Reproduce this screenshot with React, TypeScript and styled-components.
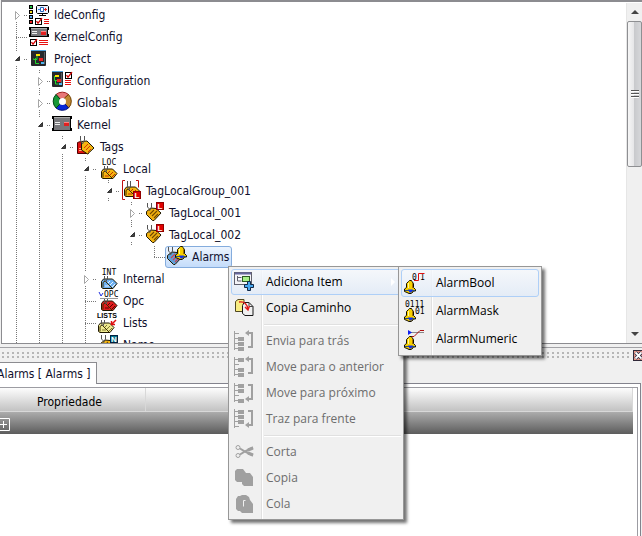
import React from "react";
import styled, { createGlobalStyle, css } from "styled-components";

const GlobalStyle = createGlobalStyle`
  * { box-sizing: border-box; }
  body { margin: 0; background: #f0f0f0; overflow: hidden; }
  button { font: inherit; color: inherit; margin: 0; padding: 0; border: 0; background: none; text-align: left; }
  svg { display: block; flex: none; overflow: visible; }
`;

const uiFont = css`
  font-family: "DejaVu Sans Condensed", "Noto Sans", sans-serif;
  font-size: 12px;
  line-height: 16px;
`;

/* ---------- icons ---------- */

const Icon = ({ children }: { children: React.ReactNode }) => (
  <svg width="22" height="22" viewBox="0 0 22 22" aria-hidden="true">
    {children}
  </svg>
);

const Check = ({ x, y }: { x: number; y: number }) => (
  <g transform={`translate(${x} ${y})`}>
    <rect x=".5" y=".5" width="6" height="6" fill="#fff" stroke="#000" />
    <path d="M1.5 3.2 3 5.2 7 .2" stroke="#d80000" strokeWidth="1.3" fill="none" />
  </g>
);

const RedLines = ({ x, y, w }: { x: number; y: number; w: number }) => (
  <path
    d={`M${x} ${y + 0.5}h${w}M${x} ${y + 2.5}h${w}M${x} ${y + 4.5}h${w}`}
    stroke="#e81010"
  />
);

const Device = ({ y, h }: { y: number; h: number }) => (
  <g transform={`translate(0 ${y})`}>
    <rect x="1.5" y=".5" width="17" height={h - 1} fill="#77777b" stroke="#000" />
    <path d={`M.5 0v${h}M19.5 0v${h}`} stroke="#000" strokeDasharray={`3 ${h - 6} 3 0`} />
    <path d="M2 1.5h16" stroke="#aaa" />
    <path d={`M3 ${Math.floor(h / 2) - 0.5}h5M3 ${Math.floor(h / 2) + 1.5}h5`} stroke="#eee" />
    <rect x="12" y={Math.floor(h / 2) - 1} width="5" height="4" fill="#e02020" />
    <path d={`M12 ${Math.floor(h / 2) - 0.5}h5`} stroke="#ff8080" />
  </g>
);

const Board = ({ x, y, w }: { x: number; y: number; w: number }) => (
  <g transform={`translate(${x} ${y})`}>
    <rect width={w} height="16" rx="1" fill="#26282b" />
    <path d={`M0 .5h${w}`} stroke="#4fa3e0" />
    <path d={`M${w - 1.5} 2v12`} stroke="#5b5e63" />
    <path d={w > 12 ? "M5 5.5M6 9.500H2.500v-1M4.500 8v5.500H8M6 9.500V6" : "M2.500 5v4.500h3M3.500 10v3h3"} stroke="#23d52c" fill="none" />
    <rect x={w > 12 ? 5 : 3} y="4" width="4" height="2" fill="#ffe600" />
    <rect x={w > 12 ? 8 : 5} y="8" width="4" height="3" fill="#ee2222" />
    <rect x={w > 12 ? 10 : 7} y="12" width="3" height="2" fill="#4fb4f0" />
  </g>
);

const Badge = ({ x, y, color, edge, letter }: { x: number; y: number; color: string; edge: string; letter: string }) => (
  <g>
    <rect x={x + 0.5} y={y + 0.5} width="7" height="7" fill={color} stroke={edge} />
    <text x={x + 4} y={y + 7} fontSize="8" fontWeight="700" fill="#fff" textAnchor="middle" fontFamily="Liberation Sans, sans-serif">
      {letter}
    </text>
  </g>
);

const Diamond = ({ fill, line }: { fill: string; line: string }) => (
  <g>
    <path d="M2.5 9.5 7 6l5 .5 5 4.5-7 7.5H8.5l-6-6z" fill={fill} stroke="#201800" />
    <path d="m6 12 4-4m-2 6 5-5m-3 7 4-4" stroke={line} strokeWidth="1.1" />
    <path d="M3.5 1v4l2 2M7.5 1v4l-2 4" stroke="#555" fill="none" />
  </g>
);

const LowTag = ({ fill, line = "#c33000", dx = 0 }: { fill: string; line?: string; dx?: number }) => (
  <g transform={`translate(${dx} 0)`}>
    <path d="M3.5 19.5v-6L5.5 11h9l4.5 4.5-4 5H5z" fill={fill} stroke="#201800" />
    <path d="M5 19.5v-5L7 13l7 7" fill="none" stroke="#403000" />
    <path d="m10 15 2-2m0 4 3-3m-1 5 3-3M7 18h4" stroke={line} />
    <path d="M6.5 8v4l2 2M9.5 8v3l-2 3" stroke="#555" fill="none" />
  </g>
);

const Caption = ({ children }: { children: string }) => (
  <text x="11" y="7" fontSize="8" textAnchor="middle" fontFamily="DejaVu Sans Mono, monospace">
    {children}
  </text>
);

const Bell = ({ x, y }: { x: number; y: number }) => (
  <g transform={`translate(${x} ${y})`}>
    <path d="M5.5.5h2l.5 1 1.5 2v4l2 2V11H9v1l-2 1.5H5l-2-1-2.5-1V9l2-1.5v-4l2-2z" fill="#f7d000" stroke="#151000" />
    <path d="M4.5 3v5" stroke="#fff7a0" />
    <path d="M8.5 3v5" stroke="#a87500" />
    <path d="M1 10.5h10" stroke="#28507a" />
    <path d="M4 9.5h5l-1.5 3h-2z" fill="#1030e8" />
  </g>
);

type IconName =
  | "ide" | "kernelConfig" | "project" | "config" | "globals" | "kernel" | "tags" | "local"
  | "group" | "tag" | "alarms" | "int" | "opc" | "lists" | "net";

const treeIcons: Record<IconName, React.ReactNode> = {
  ide: (
    <>
      {["#20c040", "#f0d820", "#58a8f0", "#e82020"].map((c, i) => (
        <rect key={c} x=".5" y={1.5 + 5 * i} width="3" height="3" fill={c} stroke="#000" />
      ))}
      <path d="M8.5 1.5h10l1 1v6l-1 1h-10l-1-1v-6z" fill="#eef4ff" stroke="#000" />
      <path d="M9 5.5h3" stroke="#2f86e0" />
      <path d="M11.5 3.5h3v4h-3z" fill="#fff" stroke="#2868c0" />
      <path d="M15 5.5h3M16.5 4v3" stroke="#e02020" />
      <path d="M13.5 10v1.5M10 11.5h7" stroke="#000" />
      <Check x={6} y={14} />
      <RedLines x={15} y={15} w={5} />
    </>
  ),
  kernelConfig: (
    <>
      <Device y={1} h={10} />
      <Check x={1} y={13} />
      <RedLines x={10} y={14} w={9} />
    </>
  ),
  project: <Board x={2} y={2} w={15} />,
  config: (
    <>
      <Board x={0} y={1} w={11} />
      <Check x={13} y={2} />
      <RedLines x={13} y={10} w={6} />
    </>
  ),
  globals: (
    <>
      <path d="M4 2.5A9.5 9.5 0 0 1 16.5 2.5L13 7H8z" fill="#e87878" stroke="#a02020" />
      <path d="M16.5 2.5A9.5 9.5 0 0 1 16.5 16l-4-4V6z" fill="#c08830" stroke="#704000" />
      <path d="M16.5 16A9.5 9.5 0 0 1 4 16l4-4h5z" fill="#0828d8" stroke="#001078" />
      <path d="M4 16A9.5 9.5 0 0 1 4 2.5L8 7v5z" fill="#189838" stroke="#004818" />
      <circle cx="10.5" cy="9.5" r="3.5" fill="#fff" />
    </>
  ),
  kernel: <Device y={2} h={15} />,
  tags: (
    <>
      <path d="M2.5 17.5v-11l3-1 8 12z" fill="#e01010" stroke="#500000" />
      <path d="M4 12.5h4M4 14.5h4" stroke="#ffb080" />
      <path d="M6.5 5.5 12 5l7 7-6.5 6-6-4z" fill="#f5b610" stroke="#201800" />
      <path d="m9 12 4-4m-2 6 4-4m-2 6 3-3" stroke="#e03000" />
      <path d="M5.5 0v4l2 4M9.5 0v4l-2 4" stroke="#555" fill="none" />
    </>
  ),
  local: (<><LowTag fill="#f5b610" /><Caption>LOC</Caption></>),
  group: (
    <>
      <path d="M4 .5H1.5v19H4M15 .5h2.5v7" stroke="#c01010" fill="none" />
      <g transform="translate(0 -4)"><LowTag fill="#f5b610" /></g>
      <path d="M6.5 1v4M9.5 1v4" stroke="#555" />
      <Badge x={12} y={11} color="#e00000" edge="#900000" letter="L" />
    </>
  ),
  tag: (
    <>
      <Diamond fill="#f0b010" line="#704800" />
      <Badge x={12} y={0} color="#e00000" edge="#900000" letter="L" />
    </>
  ),
  alarms: (
    <>
      <g transform="translate(-2 0)"><Diamond fill="#5f9fd8" line="#d04050" /></g>
      <Bell x={8} y={0} />
    </>
  ),
  int: (<><LowTag fill="#6db0f0" line="#e8f4ff" /><Caption>INT</Caption></>),
  opc: (
    <>
      <LowTag fill="#e01c1c" line="#5c0000" />
      <path d="M2 8.5h18" stroke="#999" />
      <path d="m1 2 2 4 2-3" stroke="#2030e0" fill="none" />
      <text x="6" y="7" fontSize="8" fontFamily="DejaVu Sans Mono, monospace">OPC</text>
    </>
  ),
  lists: (
    <>
      <LowTag fill="#eeea90" line="#807830" dx={-3} />
      <path d="m18 8-4 4m-.5-3v3.5H17" stroke="#e01010" strokeWidth="1.5" fill="none" />
      <text x="9" y="6" fontSize="7" textAnchor="middle" fontWeight="700" fontFamily="Liberation Sans, sans-serif">LISTS</text>
    </>
  ),
  net: (
    <>
      <Diamond fill="#f5b610" line="#704800" />
      <Badge x={12} y={1} color="#087890" edge="#002040" letter="N" />
    </>
  ),
};

/* ---------- tree ---------- */

const Page = styled.main`
  ${uiFont}
  color: #000;
  display: flex;
  flex-direction: column;
  height: 100vh;
  position: relative;
  overflow: hidden;
  background: #f0f0f0;
`;

const TreePane = styled.section`
  flex: 1 1 0;
  min-height: 0;
  display: flex;
  margin-left: 1px;
  background: #fff;
  border: solid #8c8c90;
  border-width: 2px 0 1px 1px;
`;

const TreeList = styled.ul`
  flex: 1;
  margin: 0;
  padding: 2px 0 0 3px;
  list-style: none;
  overflow: hidden;
`;

const TreeRow = styled.li`
  display: flex;
  height: 22px;
`;

type GuideKind = "none" | "line" | "arrow" | "tee" | "corner" | "first";
const dotsV = "repeating-linear-gradient(to bottom, #777 0 1px, transparent 1px 2px)";
const dotsH = "repeating-linear-gradient(to right, #777 0 1px, transparent 1px 2px)";
const guideImages: Record<GuideKind, string> = {
  none: "none",
  line: `${dotsV} 11px 0 / 1px 22px no-repeat`,
  arrow: `${dotsV} 11px 0 / 1px 3px no-repeat, ${dotsV} 11px 18px / 1px 4px no-repeat, ${dotsH} 19px 11px / 5px 1px no-repeat`,
  first: `${dotsV} 11px 18px / 1px 4px no-repeat, ${dotsH} 19px 11px / 5px 1px no-repeat`,
  tee: `${dotsV} 11px 0 / 1px 22px no-repeat, ${dotsH} 11px 11px / 13px 1px no-repeat`,
  corner: `${dotsV} 11px 0 / 1px 12px no-repeat, ${dotsH} 11px 11px / 13px 1px no-repeat`,
};

const Guide = styled.span<{ $kind: GuideKind }>`
  flex: none;
  width: 23px;
  height: 22px;
  background: ${(p) => guideImages[p.$kind]};
`;

const Expander = styled.button`
  display: block;
  width: 18px;
  height: 22px;
  padding: 1px 0 0 9px;
`;

const NodeButton = styled.button<{ $selected?: boolean }>`
  display: flex;
  align-items: center;
  gap: 3px;
  height: 22px;
  margin-left: ${(p) => (p.$selected ? "-1px" : "1px")};
  padding: ${(p) => (p.$selected ? "0 2px 0 1px" : "0")};
  white-space: nowrap;
  color: #10102c;
  ${(p) =>
    p.$selected &&
    css`
      border: 1px solid #84acdd;
      border-radius: 3px;
      background: linear-gradient(#ecf4fe, #c4dcfa);
    `}
`;

type Node = {
  label: string;
  icon: IconName;
  guides: GuideKind[];
  open?: boolean;
};

const L: GuideKind = "line";
const A: GuideKind = "arrow";
const nodes: Node[] = [
  { label: "IdeConfig", icon: "ide", guides: ["first"], open: false },
  { label: "KernelConfig", icon: "kernelConfig", guides: ["tee"] },
  { label: "Project", icon: "project", guides: [A], open: true },
  { label: "Configuration", icon: "config", guides: [L, A], open: false },
  { label: "Globals", icon: "globals", guides: [L, A], open: false },
  { label: "Kernel", icon: "kernel", guides: [L, A], open: true },
  { label: "Tags", icon: "tags", guides: [L, L, A], open: true },
  { label: "Local", icon: "local", guides: [L, L, L, A], open: true },
  { label: "TagLocalGroup_001", icon: "group", guides: [L, L, L, L, A], open: true },
  { label: "TagLocal_001", icon: "tag", guides: [L, L, L, L, "none", A], open: false },
  { label: "TagLocal_002", icon: "tag", guides: [L, L, L, L, "none", A], open: true },
  { label: "Alarms", icon: "alarms", guides: [L, L, L, L, "none", "none", "corner"] },
  { label: "Internal", icon: "int", guides: [L, L, L, A], open: false },
  { label: "Opc", icon: "opc", guides: [L, L, L, "tee"] },
  { label: "Lists", icon: "lists", guides: [L, L, L, "tee"] },
  { label: "Name", icon: "net", guides: [L, L, L, "tee"] },
];

const ScrollBar = styled.div`
  flex: none;
  width: 16px;
  margin-top: 1px;
  display: flex;
  flex-direction: column;
  background: #f0f0f0;
  border-left: 1px solid #e6e6e6;
`;

const ScrollArrow = styled.button`
  height: 18px;
  display: grid;
  place-items: center;
`;

const ScrollTrack = styled.div`
  flex: 1;
`;

const ScrollThumb = styled.div`
  height: 48%;
  border: 1px solid #8e8f92;
  border-radius: 2px;
  background: linear-gradient(to right, #f6f6f6, #e6e6e8 45%, #c9cacd 50%, #d6d7da);
  display: grid;
  place-items: center;
`;

/* ---------- property dock ---------- */

const Splitter = styled.div`
  display: flex;
  align-items: center;
  height: 15px;
  margin-top: 3px;
  border-top: 1px solid #a2a2a6;
`;

const Grip = styled.div`
  flex: 1;
  height: 8px;
  margin: 1px 3px 0 2px;
  background: conic-gradient(from 270deg at 2px 2px, #b6b6b6 90deg, transparent 0) 0 0 / 5px 4px;
`;

const CloseButton = styled.button`
  width: 9px;
  height: 11px;
  overflow: hidden;
`;

const TabBar = styled.div`
  display: flex;
  height: 22px;
  margin-right: 1px;
`;

const Tab = styled.button`
  padding: 0 6px 0 0;
  height: 22px;
  margin-left: -3px;
  background: #fff;
  border: solid #8c8c90;
  border-width: 1px 1px 0 0;
  white-space: nowrap;
  color: #10102c;
`;

const TabRest = styled.div`
  flex: 1;
  border-bottom: 1px solid #83838d;
`;

const PropertyPanel = styled.section`
  min-height: 152px;
  margin-right: 1px;
  padding: 3px 2px 0 0;
  background: #fff;
  border-right: 1px solid #83838d;
`;

const TableFrame = styled.div`
  min-height: 149px;
  border: solid #9c9ca2;
  border-width: 1px 1px 0 0;
  padding-right: 4px;
`;

const PropertyTable = styled.table`
  width: 100%;
  border-collapse: separate;
  border-spacing: 0;
  table-layout: fixed;
`;

const HeadCell = styled.th<{ $first?: boolean }>`
  width: ${(p) => (p.$first ? "146px" : "auto")};
  height: 24px;
  padding: 4px 6px 0 0;
  font-weight: 400;
  text-align: center;
  border: solid #d8d8d8;
  border-width: 0 1px 1px 0;
  background: linear-gradient(#fdfdfd, #c2c2c2);
`;

const GroupCell = styled.td`
  height: 22px;
  padding: 0;
  background: linear-gradient(#acacac, #5c5c5c);
`;

const PlusButton = styled.button`
  display: block;
  margin: 3px 0 0 -3px;
`;

/* ---------- menus ---------- */

const Menu = styled.div<{ $sub?: boolean }>`
  position: absolute;
  left: ${(p) => (p.$sub ? "398px" : "228px")};
  top: 266px;
  width: ${(p) => (p.$sub ? "144px" : "176px")};
  padding: 2px;
  font-family: "Open Sans", "Noto Sans", sans-serif;
  font-size: 12px;
  line-height: 16px;
  border: 1px solid #979797;
  background: linear-gradient(to right, transparent 30px, #e0e0e0 30px 31px, #fff 31px 32px, transparent 32px) 2px 2px no-repeat, #f0f0f0;
  box-shadow: 3px 3px 3px rgba(0, 0, 0, 0.55);
`;

const MenuItem = styled.button<{ $tall?: boolean; $hot?: boolean }>`
  display: grid;
  grid-template-columns: 34px 1fr auto;
  align-items: center;
  width: 100%;
  height: ${(p) => (p.$tall ? "28px" : "26px")};
  padding: 0 4px 0 0;
  white-space: nowrap;
  border: 1px solid transparent;
  border-radius: 3px;
  &:disabled { color: #6d6d6d; }
  ${(p) =>
    p.$hot &&
    css`
      border-color: #aecff7;
      background: linear-gradient(rgba(246, 249, 253, 0.8), rgba(225, 235, 248, 0.8));
    `}
`;

const MenuRule = styled.hr`
  height: 2px;
  margin: 3px 0 2px 33px;
  border: 0;
  border-top: 1px solid #e0e0e0;
  border-bottom: 1px solid #fff;
`;

const IconSlot = styled.span`
  padding-left: 2px;
`;

const Branches = ({ up, blocks }: { up: boolean; blocks: number[] }) => (
  <Icon>
    <g stroke="#a0a0a0" fill="none">
      <path d="M.5 1v19" />
      {[2, 7, 12, 17].map((y) => (
        <path key={y} d={`M0 ${y + 1.5}h5`} />
      ))}
      {blocks.map((b) => (
        <rect key={b} x="4.5" y={b + 0.5} width="5" height="3" fill="#a0a0a0" />
      ))}
      <path d="M14 3h4v14h-4" strokeWidth="2" />
    </g>
    <path d={up ? "M11 3 15 0v6z" : "m11 17 4-3v6z"} fill="#a0a0a0" />
  </Icon>
);

const bits = { fontSize: 8, fontFamily: "DejaVu Sans Mono, monospace" };

const menuIcons = {
  add: (
    <>
      <rect x=".5" y="1.5" width="17" height="12" fill="#f4f4f8" stroke="#60606c" />
      <path d="M1 2.5h16" stroke="#66669c" strokeWidth="2" />
      <path d="M3.5 5v5h4M3.5 6.5h4" stroke="#60606c" fill="none" />
      <rect x="8.5" y="5.5" width="7" height="5" fill="#a8f088" stroke="#2c5c20" />
      <path d="M13.5 10.5h3v3h3v3h-3v3h-3v-3h-3v-3h3z" fill="#48a8f0" stroke="#102848" />
    </>
  ),
  path: (
    <>
      <path d="M1.5 4.5 4 2.5h6v12H1.5z" fill="#f8ec80" stroke="#504820" />
      <path d="M8.5 8.5 10 5.5h5l4 4v9h-8l-2.5-2z" fill="#f0f0f0" stroke="#181818" />
      <path d="M15 5.5v4h4" stroke="#444" fill="none" />
      <path d="M5 5c5-1 8 2 9 7m-3-2 3 3 1.5-4" fill="none" stroke="#e01818" strokeWidth="1.3" />
    </>
  ),
  cut: (
    <g stroke="#a0a0a0" fill="none">
      <circle cx="4" cy="6.5" r="2" />
      <circle cx="4" cy="14.5" r="2" />
      <path d="m6 7.5 5 3 8 4M6 13.5l5-3 8-4" strokeWidth="2" />
      <path d="m14 9 5-2M14 12l5 2" strokeWidth="3" />
    </g>
  ),
  copy: <path d="M1 4 3 2h6l3 4h4l3 4v9h-9l-2-2v-2H3l-2-2z" fill="#a0a0a0" />,
  paste: (
    <>
      <path d="M2 6 4 3h2l2-1h4l3 2 1 3 3 4v9H8l-2-2H4l-2-2z" fill="#a0a0a0" />
      <path d="M11.5 7.5h-2v6" stroke="#f0f0f0" fill="none" />
    </>
  ),
  bool: (
    <>
      <text x="8" y="8" {...bits}>0</text>
      <text x="16" y="8" {...bits}>1</text>
      <path d="M10 8.5h4.5v-7h6" stroke="#e01010" fill="none" />
      <Bell x={0} y={8} />
    </>
  ),
  mask: (
    <>
      <text x="1" y="7" {...bits}>0111</text>
      <text x="11" y="14" {...bits}>01</text>
      <Bell x={0} y={8} />
    </>
  ),
  numeric: (
    <>
      <path d="M4 4.5h16" stroke="#888" />
      <path d="m4 2 4 2.5L4 7z" fill="#1020f0" />
      <path d="M7 8.5h3l6-6h4" stroke="#b01010" fill="none" />
      <Bell x={0} y={8} />
    </>
  ),
};

const moveItems = [
  { label: "Envia para trás", icon: <Branches up blocks={[7, 12, 17]} /> },
  { label: "Move para o anterior", icon: <Branches up blocks={[2, 12, 17]} /> },
  { label: "Move para próximo", icon: <Branches up={false} blocks={[2, 7, 17]} /> },
  { label: "Traz para frente", icon: <Branches up={false} blocks={[2, 7, 12]} /> },
];
const editItems = [
  { label: "Corta", icon: <Icon>{menuIcons.cut}</Icon> },
  { label: "Copia", icon: <Icon>{menuIcons.copy}</Icon> },
  { label: "Cola", icon: <Icon>{menuIcons.paste}</Icon> },
];
const alarmItems = [
  { label: "AlarmBool", icon: menuIcons.bool },
  { label: "AlarmMask", icon: menuIcons.mask },
  { label: "AlarmNumeric", icon: menuIcons.numeric },
];

const TreeGuides = ({ node }: { node: Node }) => (
  <>
    {node.guides.map((kind, i) => (
      <Guide key={i} $kind={kind}>
        {i === node.guides.length - 1 && node.open !== undefined && (
          <Expander aria-label={`${node.open ? "Collapse" : "Expand"} ${node.label}`}>
            <svg width="8" height="9" viewBox="0 0 8 9">
              {node.open ? (
                <path d="M5.5 1.5v4h-4z" fill="#444" stroke="#333" />
              ) : (
                <path d="M1.5.5v8l4-4z" fill="#fff" stroke="#a6a6a6" />
              )}
            </svg>
          </Expander>
        )}
      </Guide>
    ))}
  </>
);

export default function App() {
  return (
    <>
      <GlobalStyle />
      <Page>
        <TreePane>
          <TreeList role="tree">
            {nodes.map((node) => (
              <TreeRow key={node.label} role="treeitem" aria-expanded={node.open}>
                <TreeGuides node={node} />
                <NodeButton $selected={node.icon === "alarms"}>
                  <Icon>{treeIcons[node.icon]}</Icon>
                  {node.label}
                </NodeButton>
              </TreeRow>
            ))}
          </TreeList>
          <ScrollBar>
            <ScrollArrow aria-label="Scroll up">
              <svg width="8" height="4" viewBox="0 0 8 4"><path d="m0 4 4-4 4 4z" fill="#444" /></svg>
            </ScrollArrow>
            <ScrollTrack>
              <ScrollThumb>
                <svg width="8" height="8" viewBox="0 0 8 8">
                  <path d="M0 .5h8M0 3.5h8M0 6.5h8" stroke="#555" />
                  <path d="M0 1.5h8M0 4.5h8M0 7.5h8" stroke="#fff" />
                </svg>
              </ScrollThumb>
            </ScrollTrack>
            <ScrollArrow aria-label="Scroll down">
              <svg width="8" height="4" viewBox="0 0 8 4"><path d="m0 0 4 4 4-4z" fill="#444" /></svg>
            </ScrollArrow>
          </ScrollBar>
        </TreePane>

        <Splitter>
          <Grip />
          <CloseButton aria-label="Close">
            <svg width="11" height="11" viewBox="0 0 11 11">
              <rect x=".5" y=".5" width="10" height="10" fill="#e89888" stroke="#302838" />
              <path d="m2.5 2.5 6 6m0-6-6 6" stroke="#303048" strokeWidth="3.5" />
              <path d="m2.5 2.5 6 6m0-6-6 6" stroke="#fff" strokeWidth="1.8" />
            </svg>
          </CloseButton>
        </Splitter>

        <TabBar role="tablist">
          <Tab role="tab" aria-selected="true">Alarms [ Alarms ]</Tab>
          <TabRest />
        </TabBar>

        <PropertyPanel>
          <TableFrame>
            <PropertyTable>
              <thead>
                <tr>
                  <HeadCell $first>Propriedade</HeadCell>
                  <HeadCell aria-label="Valor" />
                </tr>
              </thead>
              <tbody>
                <tr>
                  <GroupCell colSpan={2}>
                    <PlusButton aria-label="Expand group">
                      <svg width="13" height="13" viewBox="0 0 13 13">
                        <path d="M.5.5h12v12H.5zM3 6.5h7M6.5 3v7" fill="none" stroke="#fff" />
                      </svg>
                    </PlusButton>
                  </GroupCell>
                </tr>
              </tbody>
            </PropertyTable>
          </TableFrame>
        </PropertyPanel>

        <Menu role="menu">
          <MenuItem role="menuitem" $hot>
            <IconSlot><Icon>{menuIcons.add}</Icon></IconSlot>
            Adiciona Item
            <svg width="5" height="8" viewBox="0 0 5 8"><path d="m0 0 4 4-4 4z" fill="#fff" /></svg>
          </MenuItem>
          <MenuItem role="menuitem">
            <IconSlot><Icon>{menuIcons.path}</Icon></IconSlot>
            Copia Caminho
          </MenuItem>
          <MenuRule />
          {moveItems.map((item) => (
            <MenuItem role="menuitem" key={item.label} disabled>
              <IconSlot>{item.icon}</IconSlot>
              {item.label}
            </MenuItem>
          ))}
          <MenuRule />
          {editItems.map((item) => (
            <MenuItem role="menuitem" key={item.label} disabled>
              <IconSlot>{item.icon}</IconSlot>
              {item.label}
            </MenuItem>
          ))}
        </Menu>

        <Menu role="menu" $sub>
          {alarmItems.map((item, i) => (
            <MenuItem role="menuitem" key={item.label} $tall $hot={i === 0}>
              <IconSlot><Icon>{item.icon}</Icon></IconSlot>
              {item.label}
            </MenuItem>
          ))}
        </Menu>
      </Page>
    </>
  );
}
